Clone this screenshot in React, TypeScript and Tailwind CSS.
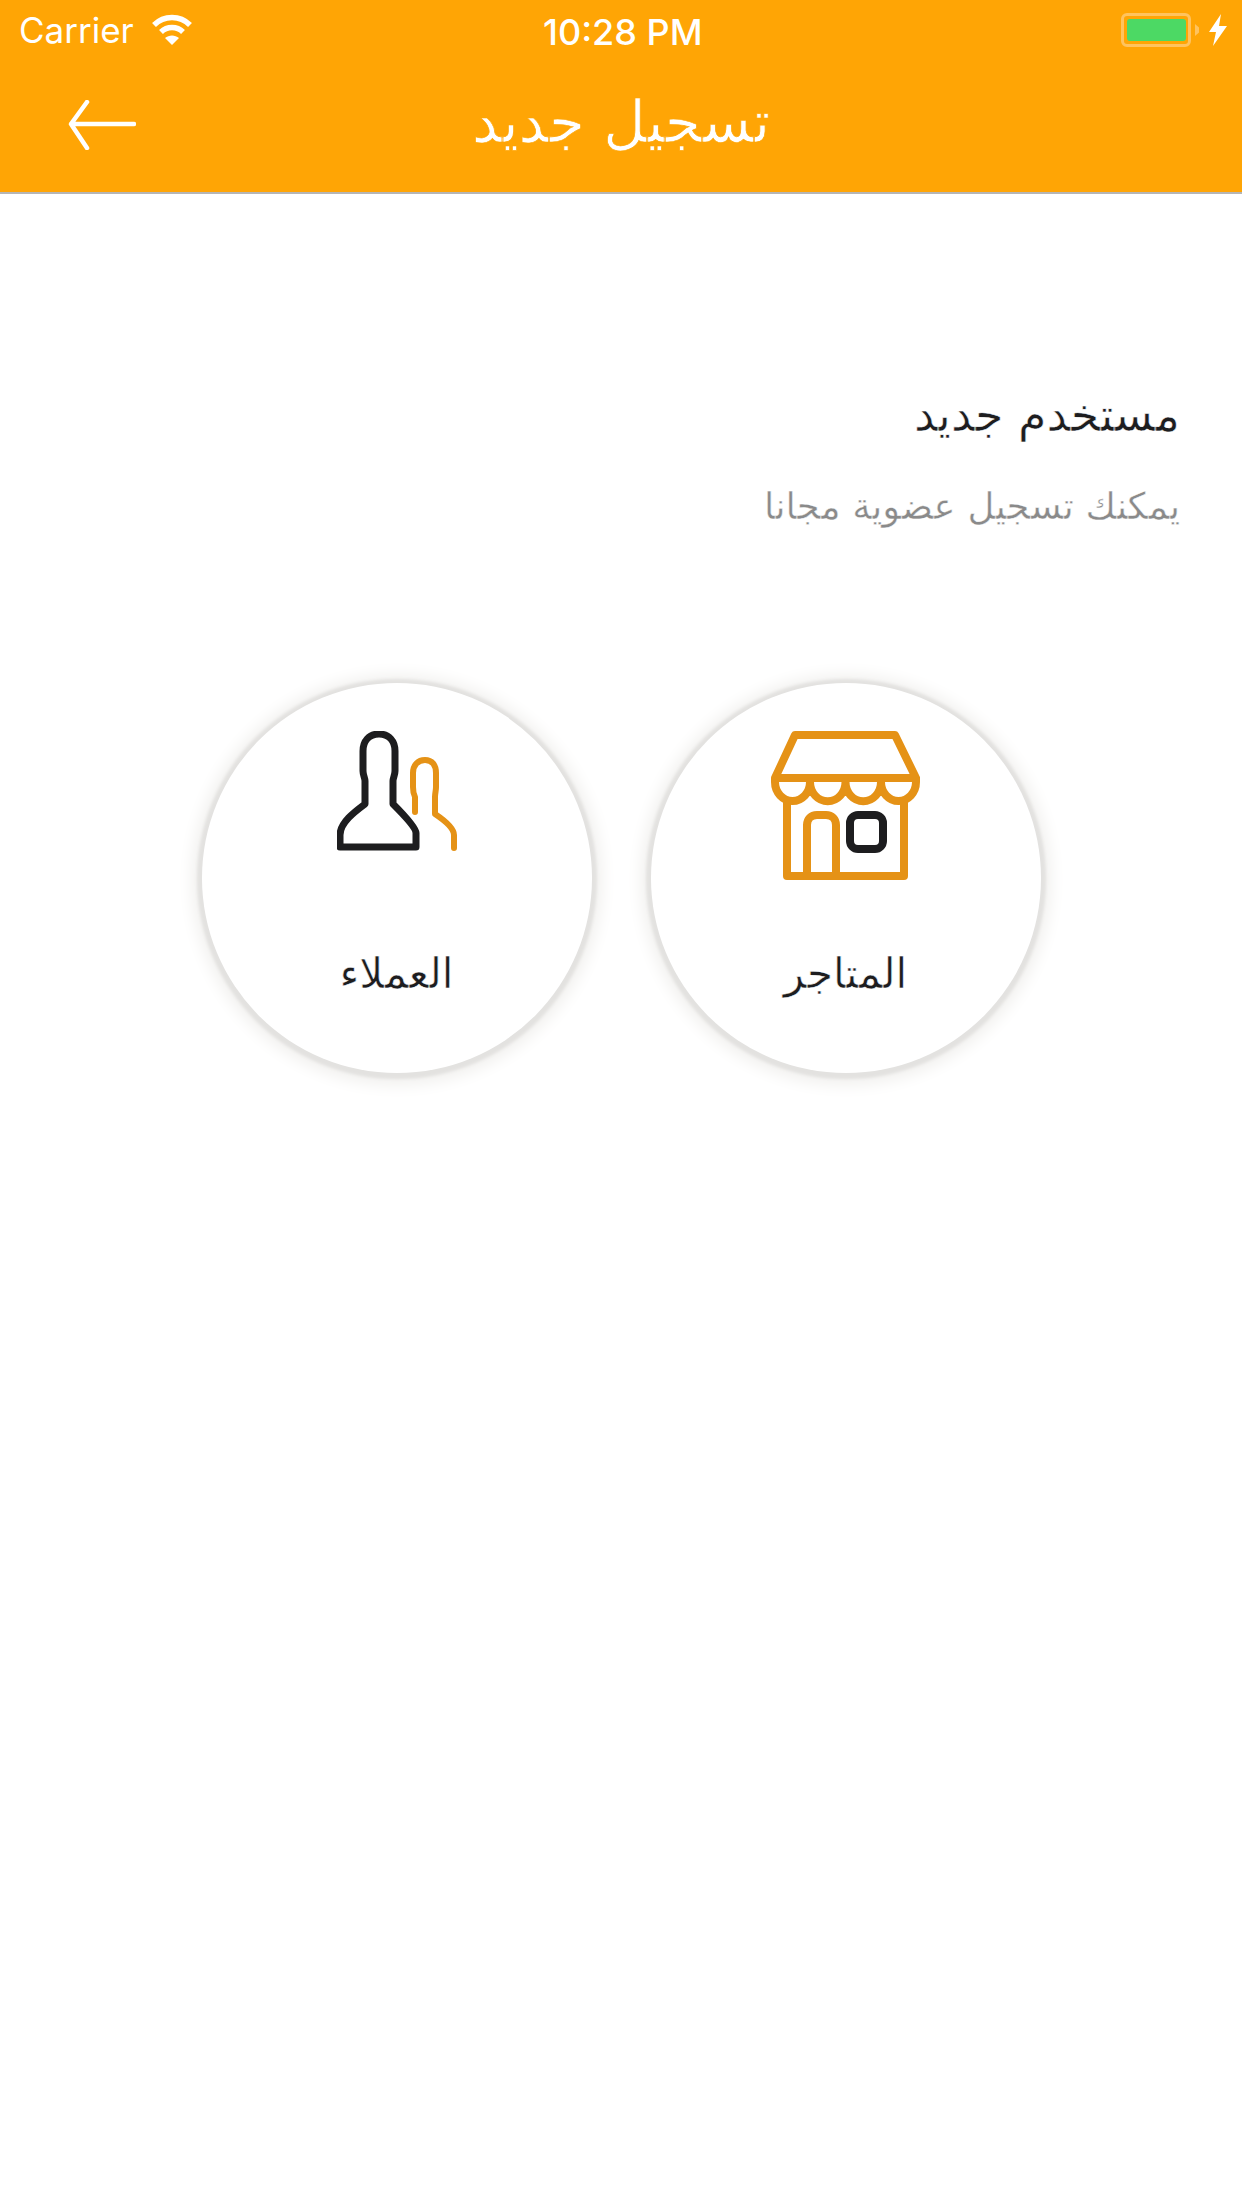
const ARABIC = "font-['DejaVu_Sans',sans-serif]";

function WifiIcon() {
  return (
    <svg width="42" height="32" viewBox="0 0 42 32" fill="none" stroke="white" strokeWidth="5.500">
      <path d="M3 11C13 1 29 1 39 11" />
      <path d="M10 18C16 12 26 12 32 18" />
      <path d="M21 31L14 24C18 20.500 24 20.500 28 24Z" fill="white" stroke="none" />
    </svg>
  );
}

function BatteryIcon() {
  return (
    <div className="flex items-center">
      <div className="flex h-[34px] w-[70px] items-center justify-center rounded-[6px] border-[3px] border-[#ffc35e]">
        <div className="h-[22px] w-[59px] rounded-[3px] bg-[#4cd964]" />
      </div>
      <div className="ml-[4px] h-[12px] w-[4px] bg-[#ffc35e] [clip-path:polygon(0_0,100%_30%,100%_70%,0_100%)]" />
      <svg className="ml-[10px]" width="18" height="32" viewBox="0 0 18 32" fill="white">
        <path d="M12 0L0 18H7L4 32L18 12H10Z" />
      </svg>
    </div>
  );
}

function StoreIcon() {
  return (
    <svg width="149" height="149" viewBox="0 0 149 149" fill="none" stroke="#e59216" strokeWidth="8" strokeLinejoin="round">
      <path d="M24 4H124L145 47H4Z" />
      <path d="M4 47V51A17.500 19 0 0 0 39 51A17.500 19 0 0 0 74.500 51A17.500 19 0 0 0 110 51A17.500 19 0 0 0 145 51V47" />
      <path d="M16 68V145H133V68" />
      <path d="M36 145V94C36 88 40 84 46 84H55C61 84 65 88 65 94V145" />
      <rect x="79" y="84" width="33" height="34" rx="8" stroke="#1d1d1f" />
    </svg>
  );
}

function CustomersIcon() {
  return (
    <svg width="120" height="120" viewBox="0 0 120 120" fill="none" strokeLinejoin="round" strokeLinecap="round">
      <path
        d="M42 3C32 3 26 10 26 20V40C26 44 28 47 28 50V73C20 79 3 91 3 104V116H79V102C79 96 62 79 56 73V50C56 47 58 44 58 40V20C58 10 52 3 42 3Z"
        stroke="#1d1d1f"
        strokeWidth="7"
      />
      <path
        d="M78 81V66C76 62 76 60 76 56V42C76 34 81 29 88 29C95 29 99 34 99 42V56C99 60 98 62 98 66V83C104 87 117 96 117 104V117"
        stroke="#e59216"
        strokeWidth="6"
      />
    </svg>
  );
}

function RoleCircle({ label, icon }: { label: string; icon: React.ReactNode }) {
  return (
    <div className="flex h-[390px] w-[390px] flex-col items-center rounded-full bg-white pt-[48px] shadow-[0_1px_3px_5px_#e3e2e0,0_2px_16px_10px_#f1f0ee]">
      <div className="flex h-[149px] items-start justify-center">{icon}</div>
      <p dir="rtl" className={`mt-[69px] text-[42px] leading-[50px] text-[#1d1d1f] [-webkit-text-stroke:0.5px_white] ${ARABIC}`}>
        {label}
      </p>
    </div>
  );
}

export default function App() {
  return (
    <div className="min-h-[2208px] w-[1242px] bg-white">
      <header className="h-[194px] border-b-2 border-[#b5b5b5] bg-[#ffa505] text-white">
        <div className="relative flex h-[60px] items-center justify-between pr-[15px] pl-[19px] font-['Inter',sans-serif]">
          <div className="flex items-center gap-[17px] text-[35px] leading-none">
            <span>Carrier</span>
            <WifiIcon />
          </div>
          <span className="absolute top-[14px] left-[543px] text-[36px] leading-none font-medium">10:28 PM</span>
          <BatteryIcon />
        </div>
        <div className="relative flex h-[132px] items-center justify-center pb-[8px]">
          <svg className="absolute top-[40px] left-[68px]" width="68" height="50" viewBox="0 0 68 50" fill="none" stroke="white" strokeWidth="4.500" strokeLinecap="round" strokeLinejoin="round">
            <path d="M66 24H3M19 2L3 24L19 48" />
          </svg>
          <h1 dir="rtl" className={`text-[58px] leading-[64px] [-webkit-text-stroke:0.7px_#ffa505] ${ARABIC}`}>
            تسجيل جديد
          </h1>
        </div>
      </header>

      <main>
        <section dir="rtl" className={`px-[62px] pt-[188px] ${ARABIC}`}>
          <h2 className="text-[46px] leading-[66px] text-[#1d1d1f] [-webkit-text-stroke:0.5px_white]">مستخدم جديد</h2>
          <p className="mt-[34px] text-[37px] leading-[50px] text-[#8a8a8a] [-webkit-text-stroke:0.4px_white]">يمكنك تسجيل عضوية مجانا</p>
        </section>

        <section className="mt-[151px] flex justify-center gap-[59px]">
          <RoleCircle label="العملاء" icon={<CustomersIcon />} />
          <RoleCircle label="المتاجر" icon={<StoreIcon />} />
        </section>
      </main>
    </div>
  );
}
